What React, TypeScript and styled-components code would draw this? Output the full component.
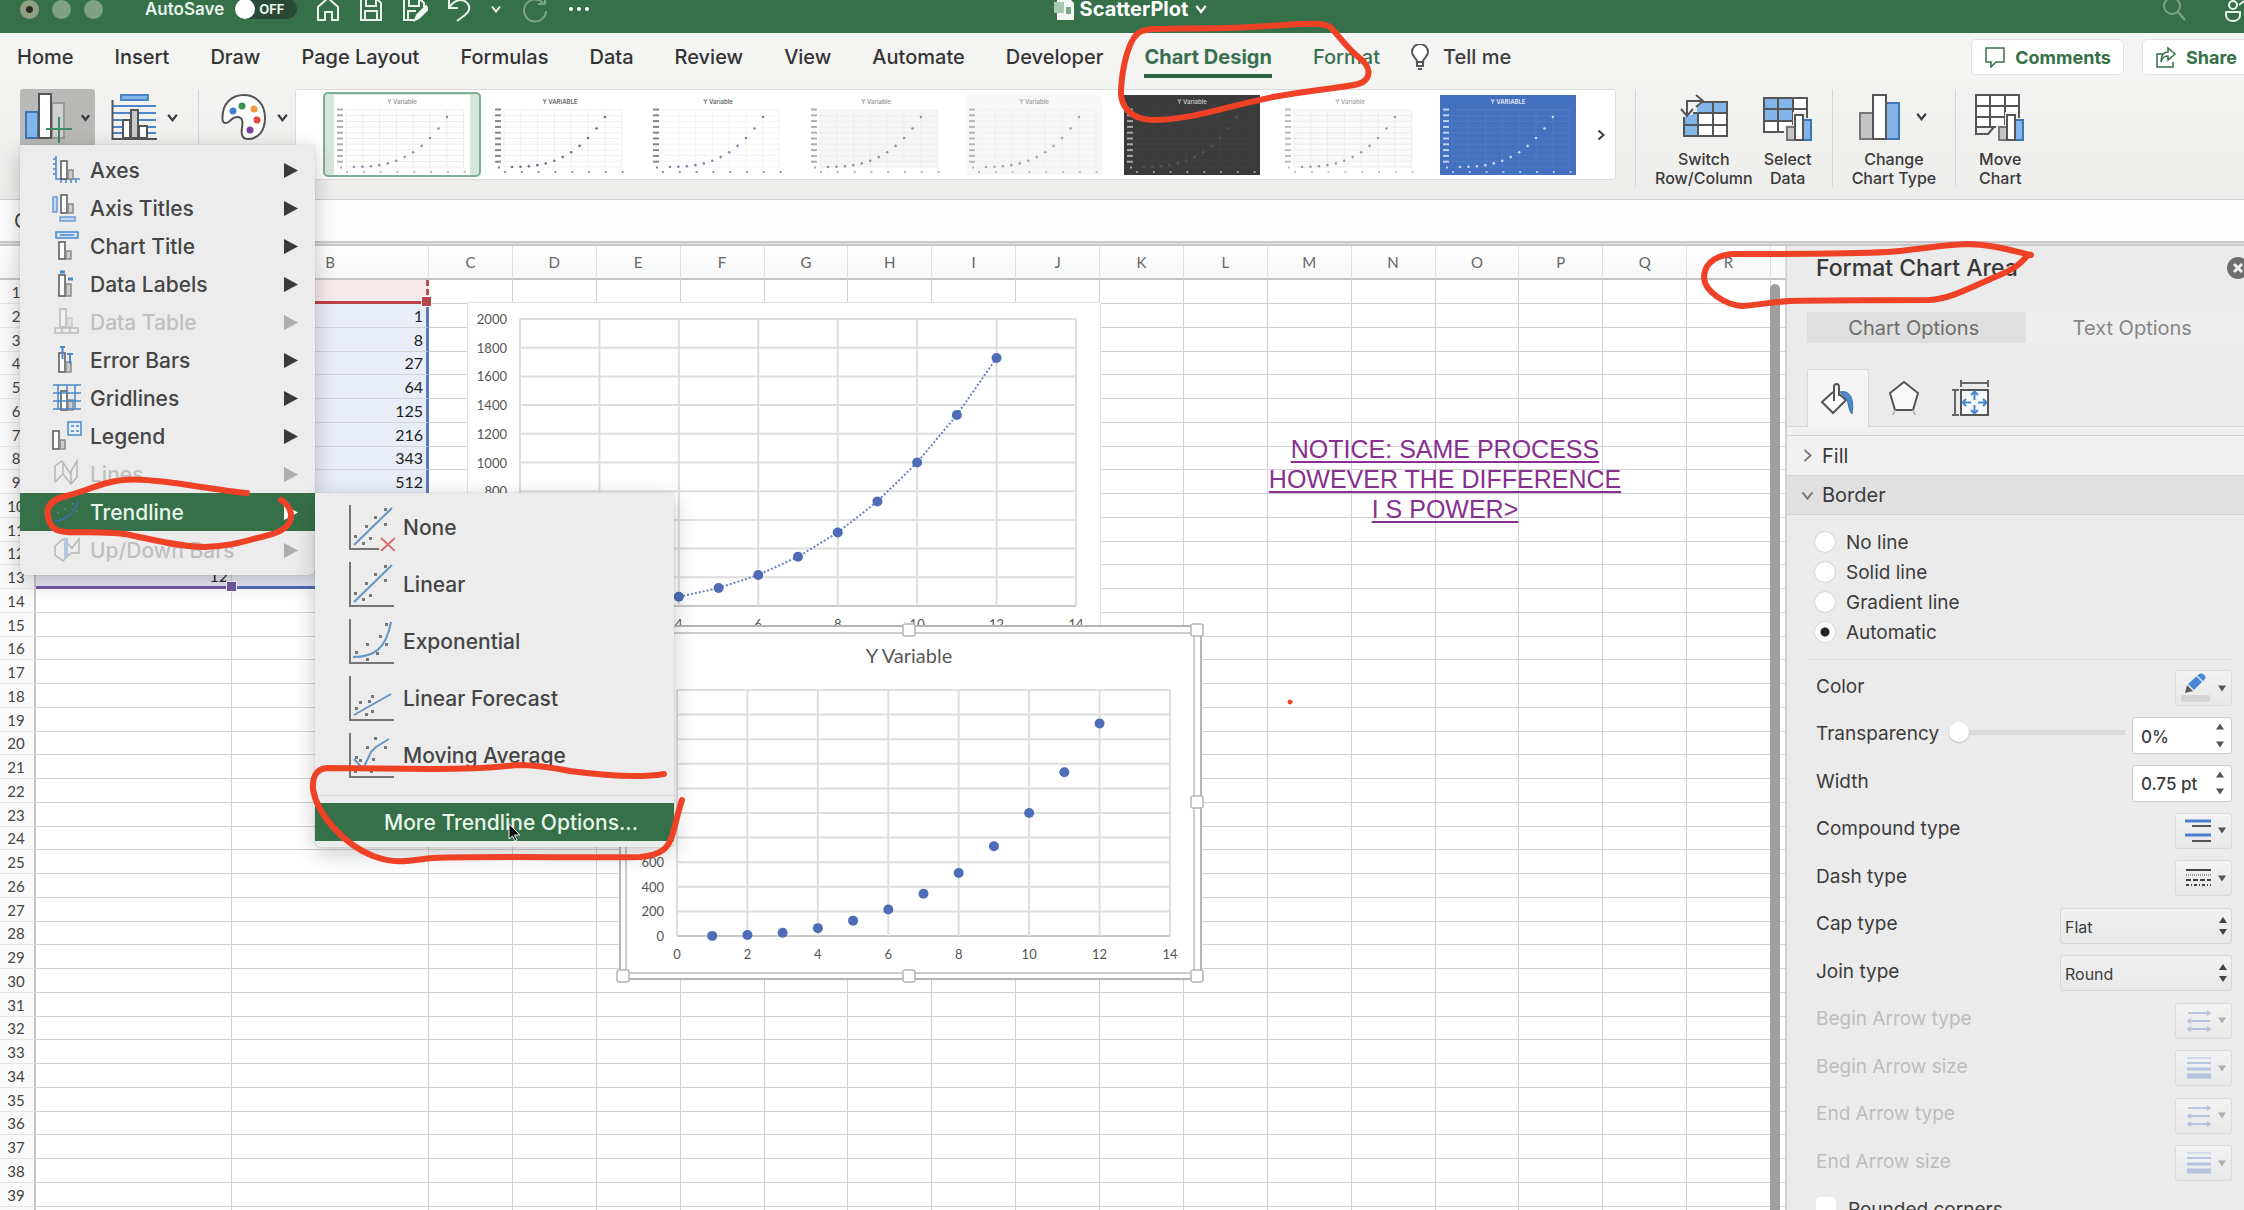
import React from "react";
import styled, { createGlobalStyle, css } from "styled-components";

const GREEN = "#357048";
const INK = "#3c3c3c";
const BLUE = "#4a86c8";
const SKY = "#84b5e8";
const UI = `Inter, "Liberation Sans", sans-serif`;
const GRID_FONT = `Lato, "Liberation Sans", sans-serif`;

const Global = createGlobalStyle`
  * { box-sizing: border-box; }
  html, body { margin: 0; height: 100%; overflow: hidden; }
  body { font-family: ${UI}; color: ${INK}; background: #fff; }
  button, input, select { font: inherit; color: inherit; margin: 0; }
  button { border: 0; background: none; padding: 0; cursor: default; }
  svg { display: block; flex: none; }
`;

const Page = styled.div`
  position: relative;
  display: flex;
  flex-direction: column;
  height: 100vh;
  overflow: hidden;
`;

/* ---------- title bar ---------- */
const TitleBar = styled.header`
  display: grid;
  grid-template-columns: 1fr auto 1fr;
  height: 33px;
  flex: none;
  padding-bottom: 15px;
  background: ${GREEN};
  color: #e8f3ea;
  overflow: hidden;
`;
const TitleGroup = styled.div<{ $end?: boolean }>`
  display: flex;
  align-items: center;
  height: 18px;
  gap: ${(p) => (p.$end ? "38px" : "19px")};
  padding-left: ${(p) => (p.$end ? "0" : "20px")};
  justify-content: ${(p) => (p.$end ? "flex-end" : "flex-start")};
`;
const Lights = styled.div`
  display: flex;
  gap: 13px;
  margin-right: 23px;
`;
const Light = styled.span<{ $dot?: boolean }>`
  width: 19px;
  height: 19px;
  border-radius: 50%;
  background: ${(p) => (p.$dot ? "radial-gradient(#2d2a22 3px, #8f9f80 4px)" : "#7fa181")};
`;
const AutoSave = styled.label`
  display: flex;
  align-items: center;
  gap: 11px;
  font-size: 17px;
  font-weight: 600;
  line-height: 18px;
`;
const Toggle = styled.button`
  display: flex;
  align-items: center;
  gap: 4px;
  width: 62px;
  height: 20px;
  border-radius: 10px;
  background: #2a4a37;
  font-size: 13px;
  font-weight: 700;
`;
const Knob = styled.span`
  width: 20px;
  height: 20px;
  border-radius: 50%;
  background: #fff;
`;
const BarIcon = styled.button<{ $dim?: boolean }>`
  opacity: ${(p) => (p.$dim ? 0.4 : 1)};
`;
const DocName = styled.h1`
  display: flex;
  align-items: center;
  gap: 6px;
  height: 18px;
  margin: 0;
  padding-left: 18px;
  font-size: 20px;
  font-weight: 700;
  line-height: 18px;
  color: #fff;
`;

/* ---------- tabs ---------- */
const TabRow = styled.nav`
  display: flex;
  align-items: center;
  height: 48px;
  flex: none;
  padding-left: 17px;
  gap: 41px;
  background: #f4f4f3;
  overflow: hidden;
`;
const Tab = styled.button<{ $tone?: "active" | "green" }>`
  height: 42px;
  font-size: 20px;
  font-weight: ${(p) => (p.$tone === "active" ? 700 : 500)};
  color: ${(p) => (p.$tone ? "#38704f" : "#333")};
  white-space: nowrap;
  box-shadow: ${(p) => (p.$tone === "active" ? "inset 0 -4px #2c6446" : "none")};
`;
const TellMe = styled.button`
  display: flex;
  align-items: center;
  gap: 14px;
  font-size: 20px;
  font-weight: 500;
  margin-left: -10px;
  white-space: nowrap;
`;
const TabActions = styled.div`
  display: flex;
  gap: 18px;
  margin-left: auto;
  margin-right: -6px;
`;
const Pill = styled.button`
  display: flex;
  align-items: center;
  justify-content: center;
  gap: 9px;
  height: 36px;
  padding: 0 12px;
  border: 1px solid #e2e2e2;
  border-radius: 5px;
  background: #fff;
  color: ${GREEN};
  font-size: 18px;
  font-weight: 700;
`;

/* ---------- ribbon ---------- */
const Ribbon = styled.section`
  display: flex;
  align-items: flex-start;
  height: 118px;
  flex: none;
  padding: 8px 0 0 20px;
  background: linear-gradient(#f3f3f2, #ededec);
`;
const MenuAnchor = styled.div`
  position: relative;
  width: 75px;
  flex: none;
`;
const SplitButton = styled.button<{ $pressed?: boolean }>`
  display: flex;
  align-items: center;
  justify-content: space-between;
  gap: ${(p) => (p.$pressed ? "5px" : "9px")};
  width: ${(p) => (p.$pressed ? "75px" : "auto")};
  height: 56px;
  padding: ${(p) => (p.$pressed ? "0 4px 0 5px" : "0")};
  border-radius: 3px 3px 0 0;
  background: ${(p) => (p.$pressed ? "#b9b9b8" : "none")};
`;
const Tools = styled.div`
  display: flex;
  padding: 0 19px 0 16px;
`;
const Rule = styled.div`
  width: 1px;
  height: 98px;
  flex: none;
  background: #d4d4d4;
`;
const Palette = styled.div`
  padding: 0 6px 0 22px;
`;
const Gallery = styled.div`
  display: flex;
  height: 91px;
  flex: none;
  padding-left: 27px;
  margin-right: 19px;
  border: 1px solid #dcdcdc;
  border-radius: 3px;
  background: #fff;
`;
const ThumbButton = styled.button<{ $selected?: boolean }>`
  display: flex;
  justify-content: center;
  width: 158px;
  height: 85px;
  margin-top: 2px;
  padding-top: 1px;
  border: 2px solid ${(p) => (p.$selected ? "#7fae94" : "transparent")};
  border-radius: 5px;
  background: ${(p) => (p.$selected ? "#d5e6dc" : "none")};
`;
const GalleryNext = styled.button`
  display: grid;
  place-items: center;
  width: 28px;
`;
const BigGroup = styled.div`
  display: flex;
  gap: 10px;
  padding: 0 19px;
`;
const BigButton = styled.button`
  display: flex;
  flex-direction: column;
  align-items: center;
  font-size: 16px;
  font-weight: 500;
  line-height: 19px;
  color: #3a3a3a;
`;
const BigIcon = styled.span`
  display: flex;
  align-items: center;
  gap: 14px;
  height: 61px;
  padding-bottom: 6px;
`;

/* ---------- menus ---------- */
const Menu = styled.ul<{ $sub?: boolean }>`
  position: absolute;
  z-index: 5;
  left: ${(p) => (p.$sub ? "100%" : "0")};
  top: ${(p) => (p.$sub ? "0" : "56px")};
  width: ${(p) => (p.$sub ? "359px" : "295px")};
  margin: 0;
  padding: 6px 0;
  list-style: none;
  background: #ececec;
  box-shadow: 0 6px 22px rgba(0, 0, 0, 0.22), 0 0 1px rgba(0, 0, 0, 0.4);
  border-radius: ${(p) => (p.$sub ? "0 0 5px 5px" : "0 0 6px 6px")};
`;
const MenuEntry = styled.li`
  position: relative;
`;
const MenuItem = styled.button<{ $sub?: boolean; $on?: boolean; $off?: boolean; $more?: boolean }>`
  display: flex;
  align-items: center;
  width: 100%;
  height: ${(p) => (p.$sub ? "57px" : "38px")};
  padding: ${(p) => (p.$more ? "0 0 0 69px" : p.$sub ? "0 0 0 33px" : "0 17px 0 32px")};
  gap: 8px;
  font-size: 21px;
  font-weight: 500;
  color: ${(p) => (p.$on ? "#e8f6e9" : "#454545")};
  background: ${(p) => (p.$on ? GREEN : "none")};
  ${(p) => p.$off && css` color: #bfbfbf; svg { opacity: 0.35; } `}
`;
const MenuLabel = styled.span`
  flex: 1;
  text-align: left;
`;
const MenuRule = styled.li`
  height: 1px;
  margin: 11px 0 7px;
  background: #d6d6d6;
`;

/* ---------- formula bar and body ---------- */
const FormulaBar = styled.div`
  height: 47px;
  flex: none;
  border-top: 1px solid #cfcfcf;
  border-bottom: 2px solid #c9c9c9;
  background: linear-gradient(#fdfdfd 41px, #c9c9c9 41px, #c9c9c9 43px, #e4e4e4 43px);
`;
const NameBox = styled.input`
  width: 120px;
  height: 41px;
  padding: 0 0 0 14px;
  border: 0;
  background: none;
  font-size: 20px;
`;
const Body = styled.main`
  display: flex;
  flex: 1;
  min-height: 0;
`;
const SheetArea = styled.section`
  position: relative;
  flex: 1;
  min-width: 0;
  overflow: hidden;
  background: #fff;
`;
const Grid = styled.table`
  width: 100%;
  table-layout: fixed;
  border-collapse: separate;
  border-spacing: 0;
  font-family: ${GRID_FONT};
  font-size: 16px;
  line-height: 18px;
`;
const ColHead = styled.th`
  height: 34px;
  padding: 0;
  border-right: 1px solid #e0e0e0;
  border-bottom: 2px solid #c4c4c4;
  background: linear-gradient(#fff, #f6f7f7);
  font-size: 15px;
  font-weight: 400;
  color: #666;
`;
const Row = styled.tr`
  height: 24px;
  &:nth-child(4n) { height: 23px; }
`;
const RowHead = styled.th`
  padding: 0 2px 0 0;
  border-right: 2px solid #c6c6c6;
  border-bottom: 1px solid #e4e4e4;
  background: #fafafa;
  font-size: 15px;
  font-weight: 400;
  text-align: center;
  color: #444;
`;
const Cell = styled.td<{ $kind?: "x" | "y" | "head"; $last?: boolean }>`
  position: relative;
  padding: 0 3px 0 0;
  border-right: 1px solid #d2d2d2;
  border-bottom: 1px solid #d2d2d2;
  text-align: right;
  color: #222;
  ${(p) => p.$kind === "x" && css` background: #ebe8f4; `}
  ${(p) => p.$kind === "y" && css` background: #e9edf8; border-right: 3px solid #5a78bd; `}
  ${(p) => p.$kind === "head" && css` background: #f8e9ea; border-right: 3px dashed #c05055; border-bottom: 3px solid #b8434a; `}
  ${(p) => p.$last && css` border-bottom: 3px solid ${p.$kind === "x" ? "#7559a8" : "#4f6db5"}; `}
`;
const Handle = styled.span<{ $color: string }>`
  position: absolute;
  right: -5px;
  bottom: -5px;
  z-index: 1;
  width: 9px;
  height: 9px;
  background: ${(p) => p.$color};
  box-shadow: 0 0 0 1px #fff;
`;
const ScrollThumb = styled.div`
  position: absolute;
  top: 38px;
  right: 6px;
  bottom: 0;
  width: 10px;
  border-radius: 5px 5px 0 0;
  background: #9f9f9f;
`;
const ChartBox = styled.figure<{ $x: number; $y: number }>`
  position: absolute;
  left: ${(p) => p.$x}px;
  top: ${(p) => p.$y}px;
  margin: 0;
`;
const Notice = styled.p`
  position: absolute;
  left: 1245px;
  top: 188px;
  width: 400px;
  margin: 0;
  font: 25px/30px "Liberation Sans", Arial, sans-serif;
  text-align: center;
  text-decoration: underline;
  text-decoration-thickness: 2px;
  text-underline-offset: 3px;
  text-decoration-skip-ink: none;
  color: #86308f;
`;

/* ---------- side panel ---------- */
const Panel = styled.aside`
  width: 458px;
  flex: none;
  border-left: 1px solid #cfcfcf;
  background: #ebebeb;
  overflow: hidden;
`;
const PanelHead = styled.div`
  display: flex;
  align-items: center;
  justify-content: space-between;
  height: 43px;
  padding-left: 29px;
  margin-right: -5px;
`;
const PanelTitle = styled.h2`
  margin: 0;
  font-size: 23px;
  font-weight: 500;
  color: #383838;
`;
const Segments = styled.div`
  display: grid;
  grid-template-columns: 1fr 1fr;
  margin: 23px 0 26px 20px;
`;
const Segment = styled.button<{ $on?: boolean }>`
  height: 31px;
  padding-right: 5px;
  font-size: 20px;
  color: ${(p) => (p.$on ? "#6c6c6c" : "#868686")};
  background: ${(p) => (p.$on ? "#dfdfdf" : "#eee")};
`;
const IconTabs = styled.div`
  display: flex;
  padding-left: 20px;
  height: 58px;
  border-bottom: 1px solid #d6d6d6;
`;
const IconTab = styled.button<{ $on?: boolean }>`
  display: grid;
  place-items: center;
  width: 62px;
  height: 58px;
  margin-right: 4px;
  border: ${(p) => (p.$on ? "1px solid #d8d8d8" : "0")};
  border-bottom: 0;
  border-radius: 3px 3px 0 0;
  background: ${(p) => (p.$on ? "#f5f5f5" : "none")};
`;
const Section = styled.button<{ $open?: boolean }>`
  display: flex;
  align-items: center;
  gap: 7px;
  width: 100%;
  height: 40px;
  padding-left: 13px;
  border-top: 1px solid #d2d2d2;
  border-bottom: ${(p) => (p.$open ? "1px solid #d2d2d2" : "0")};
  background: ${(p) => (p.$open ? "#e0e0e0" : "#f1f1f1")};
  font-size: 20px;
`;
const Strip = styled.div`
  height: 8px;
  background: #f1f1f1;
`;
const Radios = styled.fieldset`
  margin: 12px 12px 0 20px;
  padding: 0 0 12px 8px;
  border: 0;
  border-bottom: 1px solid #dedede;
`;
const RadioLabel = styled.label`
  display: flex;
  align-items: center;
  gap: 11px;
  height: 30px;
  font-size: 19px;
`;
const Radio = styled.input`
  appearance: none;
  width: 20px;
  height: 20px;
  border-radius: 50%;
  background: #fff;
  box-shadow: 0 0 2px rgba(0, 0, 0, 0.25);
  &:checked { background: radial-gradient(#222 4px, #fff 5px); }
`;
const Rows = styled.div`
  padding: 4px 12px 0 29px;
`;
const Field = styled.div<{ $off?: boolean }>`
  display: flex;
  align-items: center;
  justify-content: space-between;
  height: 48px;
  font-size: 19px;
  color: ${(p) => (p.$off ? "#bdbdbd" : INK)};
  &:nth-child(even) { height: 47px; }
`;
const FieldLabel = styled.label`
  padding-bottom: 4px;
`;
const DropButton = styled.button<{ $off?: boolean }>`
  display: flex;
  align-items: center;
  justify-content: flex-end;
  gap: 7px;
  width: 57px;
  height: 36px;
  padding-right: 5px;
  border: 1px solid #dadada;
  border-radius: 3px;
  background: linear-gradient(#f3f3f3, #e8e8e8);
  svg { opacity: ${(p) => (p.$off ? 0.4 : 1)}; }
`;
const Slider = styled.input`
  appearance: none;
  flex: 1;
  min-width: 0;
  height: 20px;
  margin: 0 7px 7px 10px;
  background: linear-gradient(#dadada, #dadada) center / 100% 5px no-repeat;
  &::-webkit-slider-thumb {
    appearance: none;
    width: 20px;
    height: 20px;
    border-radius: 50%;
    background: #fff;
    box-shadow: 0 1px 2px rgba(0, 0, 0, 0.2);
  }
`;
const SpinBox = styled.div`
  display: flex;
  width: 100px;
  height: 37px;
  border: 1px solid #cdcdcd;
  border-radius: 3px;
  background: #fff;
`;
const SpinInput = styled.input`
  flex: 1;
  min-width: 0;
  padding: 2px 0 0 8px;
  border: 0;
  background: none;
  font-size: 17px;
  font-weight: 500;
`;
const SpinArrows = styled.div`
  display: grid;
  width: 22px;
  button { display: grid; place-items: center; }
`;
const SelectBox = styled.div`
  position: relative;
  width: 172px;
  svg { position: absolute; right: 5px; top: 9px; pointer-events: none; }
`;
const Select = styled.select`
  appearance: none;
  width: 100%;
  height: 36px;
  padding: 2px 4px 0;
  border: 1px solid #d6d6d6;
  border-radius: 3px;
  background: linear-gradient(#f1f1f1, #e8e8e8);
  font-size: 16px;
`;
const CheckLabel = styled.label`
  display: flex;
  align-items: center;
  gap: 12px;
  padding: 10px 0 0 29px;
  font-size: 19px;
`;
const Check = styled.input`
  appearance: none;
  width: 20px;
  height: 24px;
  border-radius: 4px;
  background: #fff;
`;
const Ink = styled.svg`
  position: absolute;
  left: 0;
  top: 0;
  z-index: 10;
  pointer-events: none;
`;

/* ---------- small drawings ---------- */
const Chevron = ({ dir = "down", size = 12, color = INK, w = 2 }: { dir?: "down" | "right"; size?: number; color?: string; w?: number }) => (
  <svg width={size} height={size} viewBox="0 0 12 12" fill="none" stroke={color} strokeWidth={w}>
    <path d={dir === "down" ? "M2 3.5l4 5 4-5" : "M3.5 1.5l5 4.5-5 4.5"} />
  </svg>
);
const Tri = ({ up, color = "#555" }: { up?: boolean; color?: string }) => (
  <svg width="8" height="7" viewBox="0 0 8 7"><path fill={color} d={up ? "M0 6.5L4 .5l4 6z" : "M0 .5l4 6 4-6z"} /></svg>
);
const MenuArrow = ({ color }: { color: string }) => (
  <svg width="14" height="15" viewBox="0 0 14 15"><path fill={color} d="M0 0l14 7.5L0 15z" /></svg>
);

const S = ({ w, h, children, box }: { w: number; h: number; box?: string; children: React.ReactNode }) => (
  <svg width={w} height={h} viewBox={box ?? `0 0 ${w} ${h}`} fill="none" stroke="currentColor" strokeWidth="2">{children}</svg>
);

const Bars = ({ x = 8, y = 6, b = 26 }: { x?: number; y?: number; b?: number }) => (
  <g stroke="#555" strokeWidth="1.5">
    <rect x={x} y={y} width="6" height={b - y} fill="#fff" />
    <rect x={x + 7} y={y + 9} width="5" height={b - y - 9} fill="#ccc" stroke="#8a8a8a" />
  </g>
);

const menuIcons: Record<string, React.ReactNode> = {
  Axes: <><path d="M4 1v23h24M1 4h3M1 9h3M1 14h3M1 19h3M9 24v4M14 24v4M19 24v4M24 24v4" stroke={BLUE} strokeWidth="1.5" /><Bars x={9} y={6} b={24} /></>,
  "Axis Titles": <><rect x="1" y="4" width="4" height="15" fill="#c5d8f2" stroke="#6d9bd4" strokeWidth="1.5" /><rect x="8" y="24" width="15" height="4" fill="#c5d8f2" stroke="#6d9bd4" strokeWidth="1.5" /><Bars x={9} y={2} b={20} /></>,
  "Chart Title": <><rect x="4" y="1" width="22" height="6" fill="#cfe1f5" stroke={BLUE} strokeWidth="1.5" /><path d="M8 4h14" stroke={BLUE} strokeWidth="1.5" /><Bars x={7} y={11} b={28} /></>,
  "Data Labels": <><path d="M8 3h5M16 10h5" stroke={BLUE} strokeWidth="3" /><Bars x={7} y={6} b={27} /></>,
  "Data Table": <><Bars x={8} y={2} b={20} /><path d="M3 21h23v5H3zM10 21v5M18 21v5" stroke="#666" strokeWidth="1.5" /></>,
  "Error Bars": <><Bars x={7} y={8} b={27} /><path d="M8 2h5M10.500 2v12M15 9h6M18 9v10" stroke={BLUE} strokeWidth="2" /></>,
  Gridlines: <><Bars x={9} y={8} b={27} /><path d="M1 2h28M1 10h28M1 18h28M1 26h28M6 2v24M15 2v7M23 2v24" stroke={BLUE} strokeWidth="1.5" /></>,
  Legend: <><Bars x={1} y={10} b={28} /><rect x="16" y="1" width="13" height="13" fill="#e8f1fb" stroke={BLUE} strokeWidth="1.5" /><path d="M19 5h3M19 10h3M24 5h3M24 10h3" stroke={BLUE} strokeWidth="1.5" /></>,
  Lines: <path d="M3 7l7-5 8 12 7-12v16l-6 7-8-10-8 8zM11 3v12M19 13v11" stroke="#555" strokeWidth="1.5" />,
  Trendline: <><path d="M3 24c10 0 20-8 23-20" stroke="#3c6f9e" strokeWidth="2" /><path d="M5 16h2M12 12h2M20 7h2M24 14h2" stroke="#57806a" strokeWidth="2" /></>,
  "Up/Down Bars": <><path d="M3 11l8-7 9 9 7-9v14l-8 0-8 8-8-6z" stroke="#555" strokeWidth="1.5" /><path d="M14 3v20" stroke={BLUE} strokeWidth="4" /></>,
};

const trendIcons: Record<string, React.ReactNode> = {
  None: <path d="M6 40L44 3" />,
  Linear: <path d="M6 40L44 3" />,
  Exponential: <path d="M5 38C26 38 38 30 43 3" />,
  "Linear Forecast": <path d="M6 39L43 18" />,
  "Moving Average": <path d="M6 26l9 10 8-17 5-5 13-8" />,
};
const trendDots: Record<string, number[][]> = {
  None: [[7, 31], [15, 38], [22, 33], [18, 21], [27, 12], [37, 19], [37, 4]],
  Linear: [[7, 31], [15, 37], [22, 33], [18, 21], [27, 12], [37, 18], [37, 4]],
  Exponential: [[8, 33], [19, 40], [29, 34], [19, 25], [32, 17], [38, 25], [38, 5]],
  "Linear Forecast": [[8, 32], [12, 26], [21, 25], [24, 20], [18, 38], [24, 35]],
  "Moving Average": [[8, 24], [12, 27], [19, 14], [27, 5], [25, 26], [37, 14], [7, 38], [23, 38]],
};
const TrendIcon = ({ name }: { name: string }) => (
  <svg width="47" height="46" viewBox="0 0 47 46" fill="none">
    <path d={name === "None" ? "M2 0v44h29" : "M2 0v44h44"} stroke="#757575" strokeWidth="2" />
    <g stroke="#6795c4" strokeWidth="2">{trendIcons[name]}</g>
    {trendDots[name].map(([x, y]) => <rect key={`${x}-${y}`} x={x - 1} y={y - 1} width="3" height="3" fill="#777" />)}
    {name === "None" && <path d="M33 33l14 13M47 33L33 46" stroke="#dc6a6f" strokeWidth="2" />}
  </svg>
);

const cubes = Array.from({ length: 12 }, (_, i) => (i + 1) ** 3);

type ThumbKind = { bg: string; line: string; dot: string; text: string; title: string; plot?: string };
const thumbs: ThumbKind[] = [
  { bg: "#fff", line: "#ececec", dot: "#8e93a8", text: "#999", title: "Y Variable" },
  { bg: "#fff", line: "#efefef", dot: "#6c7188", text: "#666", title: "Y VARIABLE" },
  { bg: "#fff", line: "#f3f3f3", dot: "#7f87ad", text: "#666", title: "Y Variable" },
  { bg: "#fff", line: "#ededed", dot: "#8e93a0", text: "#999", title: "Y Variable", plot: "#f6f6f6" },
  { bg: "#f7f7f7", line: "#efefef", dot: "#a2a4b0", text: "#a5a5a5", title: "Y Variable" },
  { bg: "#3b3b3b", line: "#414141", dot: "#50545f", text: "#c4c4c4", title: "Y Variable" },
  { bg: "#fff", line: "#ececec", dot: "#9a9da6", text: "#aaa", title: "Y Variable", plot: "#fafafa" },
  { bg: "#4470c0", line: "#4f7ac6", dot: "#c9d8f2", text: "#e1eafa", title: "Y VARIABLE" },
];
const Thumb = ({ t }: { t: ThumbKind }) => (
  <svg width="136" height="80" viewBox="0 0 136 80">
    <rect width="136" height="80" fill={t.bg} />
    {t.plot && <rect x="12" y="15" width="118" height="57" fill={t.plot} />}
    <path stroke={t.line} d={Array.from({ length: 11 }, (_, i) => `M12 ${15 + i * 5.7}H130`).join("") + Array.from({ length: 8 }, (_, i) => `M${12 + i * 16.8} 15V72`).join("")} />
    {Array.from({ length: 11 }, (_, i) => <rect key={i} x={i === 10 ? 6 : 3} y={13.5 + i * 5.8} width={i === 10 ? 2 : 6} height="2" fill={t.text} opacity="0.8" />)}
    {Array.from({ length: 8 }, (_, i) => <rect key={i} x={12 + i * 16.8} y="76" width="2" height="2" fill={t.text} opacity="0.7" />)}
    {cubes.map((v, i) => <circle key={v} cx={20 + i * 8.45} cy={72 - (v / 1728) * 50} r="1.3" fill={t.dot} />)}
    <text x="68" y="9" textAnchor="middle" fontSize="6" fontWeight="600" fill={t.text}>{t.title}</text>
  </svg>
);

/* ---------- worksheet charts ---------- */
type PlotProps = { x: number; y: number; w: number; h: number; size: number; trend?: boolean };
const Plot = ({ x, y, w, h, size, trend }: PlotProps) => {
  const px = (v: number) => x + (v / 14) * w;
  const py = (v: number) => y + h - (v / 2000) * h;
  return (
    <g fontFamily={GRID_FONT} fontSize="13" fill="#555">
      {Array.from({ length: 11 }, (_, i) => (
        <g key={i}>
          <path d={`M${x} ${py(i * 200)}H${x + w}`} stroke={i === 0 ? "#c8c8c8" : "#dedede"} strokeWidth="2" />
          <text x={x - 13} y={py(i * 200) + 5} textAnchor="end">{i * 200}</text>
        </g>
      ))}
      {Array.from({ length: 8 }, (_, i) => (
        <g key={i}>
          <path d={`M${px(i * 2)} ${y}V${y + h}`} stroke="#dedede" strokeWidth="2" />
          <text x={px(i * 2)} y={y + h + 23} textAnchor="middle">{i * 2}</text>
        </g>
      ))}
      {trend && <polyline fill="none" stroke="#6a82c4" strokeWidth="2" strokeDasharray="2 2" points={cubes.map((v, i) => `${px(i + 1)},${py(v)}`).join(" ")} />}
      {cubes.map((v, i) => <circle key={v} cx={px(i + 1)} cy={py(v)} r={size} fill="#4e6db6" />)}
    </g>
  );
};

const ChartOne = () => (
  <svg width="634" height="346" viewBox="0 0 634 346">
    <rect x="0.5" y="0.5" width="633" height="345" fill="#fff" stroke="#e2e2e2" />
    <Plot x={53} y={17} w={556} h={287} size={5} trend />
  </svg>
);
const ChartTwo = () => (
  <svg width="592" height="364" viewBox="0 0 592 364">
    <rect x="5" y="5" width="581" height="353" fill="#fff" stroke="#b5b5b5" strokeWidth="2" />
    <rect x="11" y="12" width="568" height="340" fill="#fff" stroke="#cdcdcd" strokeWidth="2" />
    <text x="294" y="42" textAnchor="middle" fontFamily={GRID_FONT} fontSize="20" fill="#595959">Y Variable</text>
    <Plot x={62} y={69} w={493} h={246} size={5} />
    {[[8, 9], [294, 9], [582, 9], [582, 181], [582, 355], [294, 355], [8, 355]].map(([cx, cy]) => (
      <rect key={`${cx}-${cy}`} x={cx - 6} y={cy - 6} width="12" height="12" rx="2" fill="#fff" stroke="#b5b5b5" strokeWidth="1.5" />
    ))}
  </svg>
);

/* ---------- ribbon drawings ---------- */
const BarTrio = ({ flip }: { flip?: boolean }) => (
  <svg width="42" height="46" viewBox="0 0 42 46" stroke="#555" strokeWidth="2">
    {flip ? (
      <>
        <rect x="1" y="19" width="12" height="26" fill={SKY} stroke="#3d76b5" />
        <rect x="27" y="10" width="12" height="35" fill="#cfcfcf" stroke="#999" />
        <rect x="14" y="1" width="12" height="44" fill="#fff" />
      </>
    ) : (
      <>
        <rect x="1" y="19" width="13" height="26" fill="#c3c3c3" stroke="#777" />
        <rect x="27" y="9" width="13" height="36" fill={SKY} stroke="#3d76b5" />
        <rect x="14" y="1" width="13" height="44" fill="#fff" />
      </>
    )}
  </svg>
);
const AddElementIcon = () => (
  <svg width="50" height="52" viewBox="0 0 50 52">
    <g transform="translate(0 2)"><BarTrio flip /></g>
    <path d="M21 38h26M34 26v26" stroke="#3f8c6a" strokeWidth="2" />
  </svg>
);
const QuickLayoutIcon = () => (
  <svg width="46" height="46" viewBox="0 0 46 46" strokeWidth="2">
    <rect x="10" y="1" width="27" height="5" fill={SKY} stroke={BLUE} />
    <path d="M2 12h43M2 19h43M2 26h43M2 33h43M2 39h43" stroke={BLUE} />
    <path d="M1.5 6v39H46" fill="none" stroke="#555" />
    <g stroke="#555"><rect x="12" y="26" width="7" height="18" fill="#fff" /><rect x="20" y="16" width="7" height="28" fill="#c9c9c9" /><rect x="28" y="32" width="8" height="12" fill="#fff" /></g>
  </svg>
);
const PaletteIcon = () => (
  <svg width="46" height="48" viewBox="0 0 46 48">
    <path d="M1.5 26C1 10 11 2 23 2c13 0 21 10 21 23S37 46 27 46c-6 0-7-5-6-11s1-11-5-11-7 6-11 6c-2 0-3.5-1-3.5-4z" fill="#fff" stroke="#555" strokeWidth="2" />
    <circle cx="12" cy="18" r="3.5" fill="#3f7fd0" /><circle cx="21" cy="13" r="3.5" fill="#3a9150" /><circle cx="33" cy="16" r="3.5" fill="#ee9a44" /><circle cx="36" cy="27" r="3.5" fill="#e04b41" /><circle cx="29" cy="37" r="3.5" fill="#7a3fa0" />
  </svg>
);
const MiniBars = () => (
  <g strokeWidth="2"><rect x="24" y="34" width="8" height="13" fill="#c3c3c3" stroke="#777" /><rect x="40" y="27" width="8" height="20" fill={SKY} stroke="#3d76b5" /><rect x="32" y="22" width="8" height="25" fill="#fff" stroke="#555" /></g>
);
const SwitchIcon = () => (
  <svg width="50" height="48" viewBox="0 0 50 48" fill="none" strokeWidth="2">
    <path d="M18 9h30v34H5V22h13z" fill="#fff" />
    <path d="M22 9h26v11H18v-7zM5 24l13-4v23H5z" fill={SKY} />
    <path d="M22 9h26v34H5V24M5 32h43M14 20h34M19 20v23M34 9v34" stroke="#555" />
    <path d="M8 22V8h15M2 16l6 7 6-7M17 2l7 6-7 6" stroke="#555" />
  </svg>
);
const SelectIcon = () => (
  <svg width="50" height="48" viewBox="0 0 50 48" fill="none" strokeWidth="2">
    <rect x="1" y="5" width="43" height="34" fill="#fff" />
    <path d="M1 5h29v23H1z" fill={SKY} />
    <path d="M1 5h43v34H1zM1 16h43M1 28h43M15 5v34M30 5v34" stroke="#555" />
    <path d="M21 32h9V19h13v6h7v23H21z" fill="#f0f0ef" /><MiniBars />
  </svg>
);
const MoveIcon = () => (
  <svg width="50" height="48" viewBox="0 0 50 48" fill="none" strokeWidth="2">
    <path d="M1 2h43v32H1z" fill="#fff" stroke="#555" /><path d="M1 13h43M1 24h43M15 2v32M30 2v32M1 34v7h12l6-7" stroke="#555" />
    <path d="M21 32h9V19h13v6h7v23H21z" fill="#f0f0ef" /><MiniBars />
  </svg>
);

const PencilIcon = () => (
  <svg width="30" height="30" viewBox="0 0 30 30">
    <path d="M7 11L18 1c3-2 8 2 6 5L13 17z" fill="#4b87d6" /><path d="M16 3l6 6" stroke="#d8e6f7" strokeWidth="1.5" /><path d="M4 20l2-8 6 6z" fill="#5a5a5a" />
    <rect x="0" y="22" width="29" height="7" rx="2" fill="#d4d4d4" />
  </svg>
);
const CompoundIcon = () => (
  <svg width="26" height="24" viewBox="0 0 26 24"><path d="M0 2h26M0 16h26" stroke="#4d7fd0" strokeWidth="3" /><path d="M7 7h19M7 22h19" stroke="#555" strokeWidth="2" /></svg>
);
const DashIcon = () => (
  <svg width="25" height="18" viewBox="0 0 25 18" stroke="#444"><path d="M0 1h25" strokeWidth="2" /><path d="M0 6h25" strokeDasharray="1 1" strokeWidth="1" /><path d="M0 11h25" strokeDasharray="5 2" strokeWidth="2" /><path d="M0 16h25" strokeDasharray="3 2 1 2" strokeWidth="2" /></svg>
);
const ArrowTypeIcon = () => (
  <svg width="24" height="22" viewBox="0 0 24 22" fill="none" stroke="#6c86bd" strokeWidth="2"><path d="M1 3h22M1 11h22M1 19h22M20 1l3 2-3 2M4 9l-3 2 3 2M4 17l-3 2 3 2M20 17l3 2-3 2" /></svg>
);
const ArrowSizeIcon = () => (
  <svg width="24" height="22" viewBox="0 0 24 22" stroke="#6486c8"><path d="M0 1h24" /><path d="M0 6h24" strokeWidth="2" /><path d="M0 12h24" strokeWidth="3" /><path d="M0 19h24" strokeWidth="5" /></svg>
);

const fields: { name: string; off?: boolean; icon?: React.ReactNode; kind: "drop" | "slide" | "spin" | "select"; value?: string }[] = [
  { name: "Color", kind: "drop", icon: <PencilIcon /> },
  { name: "Transparency", kind: "slide", value: "0%" },
  { name: "Width", kind: "spin", value: "0.75 pt" },
  { name: "Compound type", kind: "drop", icon: <CompoundIcon /> },
  { name: "Dash type", kind: "drop", icon: <DashIcon /> },
  { name: "Cap type", kind: "select", value: "Flat" },
  { name: "Join type", kind: "select", value: "Round" },
  { name: "Begin Arrow type", kind: "drop", off: true, icon: <ArrowTypeIcon /> },
  { name: "Begin Arrow size", kind: "drop", off: true, icon: <ArrowSizeIcon /> },
  { name: "End Arrow type", kind: "drop", off: true, icon: <ArrowTypeIcon /> },
  { name: "End Arrow size", kind: "drop", off: true, icon: <ArrowSizeIcon /> },
];

const Spin = ({ id, value }: { id: string; value: string }) => (
  <SpinBox>
    <SpinInput id={id} defaultValue={value} />
    <SpinArrows>
      <button aria-label="Increase"><Tri up /></button>
      <button aria-label="Decrease"><Tri /></button>
    </SpinArrows>
  </SpinBox>
);

const tabs = ["Home", "Insert", "Draw", "Page Layout", "Formulas", "Data", "Review", "View", "Automate", "Developer"];
const columns = "ABCDEFGHIJKLMNOPQR".split("");
const menuNames = Object.keys(menuIcons);
const disabled = ["Data Table", "Lines", "Up/Down Bars"];

function TrendMenu() {
  return (
    <Menu $sub>
      {Object.keys(trendIcons).map((n) => (
        <MenuEntry key={n}><MenuItem $sub><TrendIcon name={n} /><MenuLabel>{n}</MenuLabel></MenuItem></MenuEntry>
      ))}
      <MenuRule />
      <MenuEntry><MenuItem $on $more>More Trendline Options...</MenuItem></MenuEntry>
    </Menu>
  );
}

function ElementMenu() {
  return (
    <Menu>
      {menuNames.map((n) => {
        const on = n === "Trendline";
        const off = disabled.includes(n);
        return (
          <MenuEntry key={n}>
            <MenuItem $on={on} $off={off}>
              <S w={30} h={30}>{menuIcons[n]}</S>
              <MenuLabel>{n}</MenuLabel>
              <MenuArrow color={on ? "#fff" : "#3a3a3a"} />
            </MenuItem>
            {on && <TrendMenu />}
          </MenuEntry>
        );
      })}
    </Menu>
  );
}

function Worksheet() {
  return (
    <SheetArea>
      <Grid>
        <colgroup>
          <col width="36" /><col width="196" /><col width="197" />
          {columns.slice(2).map((c) => <col key={c} />)}
          <col width="15" />
        </colgroup>
        <thead>
          <tr><ColHead />{columns.map((c) => <ColHead key={c} scope="col">{c}</ColHead>)}<ColHead /></tr>
        </thead>
        <tbody>
          {Array.from({ length: 40 }, (_, i) => i + 1).map((r) => {
            const data = r >= 2 && r <= 13;
            return (
              <Row key={r}>
                <RowHead scope="row">{r}</RowHead>
                <Cell $kind={data ? "x" : undefined} $last={r === 13}>{data ? r - 1 : ""}{r === 13 && <Handle $color="#7559a8" />}</Cell>
                <Cell $kind={data ? "y" : r === 1 ? "head" : undefined} $last={r === 13}>{data ? cubes[r - 2] : ""}{r === 1 && <Handle $color="#b8434a" />}</Cell>
                {columns.slice(2).map((c) => <Cell key={c} />)}
                <Cell />
              </Row>
            );
          })}
        </tbody>
      </Grid>
      <ChartBox $x={467} $y={56}><ChartOne /></ChartBox>
      <ChartBox $x={615} $y={375}><ChartTwo /></ChartBox>
      <Notice>NOTICE: SAME PROCESS<br />HOWEVER THE DIFFERENCE<br />I S POWER&gt;</Notice>
      <ScrollThumb />
    </SheetArea>
  );
}

function FormatPanel() {
  return (
    <Panel>
      <PanelHead>
        <PanelTitle>Format Chart Area</PanelTitle>
        <button aria-label="Close">
          <svg width="22" height="22" viewBox="0 0 22 22"><circle cx="11" cy="11" r="11" fill="#6e6e6e" /><path d="M7 7l8 8M15 7l-8 8" stroke="#eee" strokeWidth="3" /></svg>
        </button>
      </PanelHead>
      <Segments><Segment $on>Chart Options</Segment><Segment>Text Options</Segment></Segments>
      <IconTabs>
        <IconTab $on aria-label="Fill and line">
          <svg width="36" height="34" viewBox="0 0 36 34"><path d="M13 10L2 20l11 11 13-13-7-6" fill="#fff" stroke="#555" strokeWidth="2" /><path d="M14 19V5c0-4 5-4 5 0v9" fill="none" stroke="#555" strokeWidth="2" /><path d="M20 10c8-2 15 4 12 22-4-4-3-12-6-15z" fill="#4d88cc" stroke="#3a6ea8" /></svg>
        </IconTab>
        <IconTab aria-label="Effects">
          <svg width="32" height="36" viewBox="0 0 32 36"><path d="M16 2l14 11-5 17H7L2 13z" fill="#fafafa" stroke="#555" strokeWidth="2" /><path d="M7 30l-2 5M25 30l2 5" stroke="#bbb" strokeWidth="2" /></svg>
        </IconTab>
        <IconTab aria-label="Size and properties">
          <svg width="38" height="38" viewBox="0 0 38 38" fill="none" strokeWidth="2"><path d="M10 4h27M10 1v7M37 1v7M4 11v25M1 11h7M1 36h7" stroke="#666" /><rect x="10" y="11" width="27" height="25" fill="#f4f8fd" stroke="#555" /><path d="M23.5 13v8M23.5 26v8M12 23.5h8M27 23.5h8M20 16l3.5-3.5L27 16M20 31l3.5 3.5L27 31M15 20l-3.5 3.5L15 27M32 20l3.5 3.5L32 27" stroke={BLUE} /></svg>
        </IconTab>
      </IconTabs>
      <Strip />
      <Section><Chevron dir="right" size={15} color="#777" w={1.5} />Fill</Section>
      <Section $open><Chevron size={15} color="#777" w={1.5} />Border</Section>
      <Radios>
        {["No line", "Solid line", "Gradient line", "Automatic"].map((n) => (
          <RadioLabel key={n}><Radio type="radio" name="line" defaultChecked={n === "Automatic"} />{n}</RadioLabel>
        ))}
      </Radios>
      <Rows>
        {fields.map((f) => {
          const id = f.name.toLowerCase().replace(/ /g, "-");
          return (
            <Field key={f.name} $off={f.off}>
              <FieldLabel htmlFor={id}>{f.name}</FieldLabel>
              {f.kind === "drop" && <DropButton id={id} $off={f.off}>{f.icon}<Tri /></DropButton>}
              {f.kind === "slide" && <><Slider type="range" defaultValue={0} aria-label="Transparency amount" /><Spin id={id} value={f.value!} /></>}
              {f.kind === "spin" && <Spin id={id} value={f.value!} />}
              {f.kind === "select" && (
                <SelectBox>
                  <Select id={id}><option>{f.value}</option></Select>
                  <svg width="8" height="18" viewBox="0 0 8 18"><path fill="#444" d="M0 6l4-6 4 6zM0 12l4 6 4-6z" /></svg>
                </SelectBox>
              )}
            </Field>
          );
        })}
      </Rows>
      <CheckLabel><Check type="checkbox" />Rounded corners</CheckLabel>
    </Panel>
  );
}

export default function App() {
  return (
    <Page>
      <Global />
      <TitleBar>
        <TitleGroup>
          <Lights><Light $dot /><Light /><Light /></Lights>
          <AutoSave>AutoSave<Toggle><Knob /><span>OFF</span></Toggle></AutoSave>
          <BarIcon aria-label="Home"><S w={24} h={26}><path d="M2 11L12 2l10 9v13h-6v-8H9v8H2z" /></S></BarIcon>
          <BarIcon aria-label="Save"><S w={24} h={26}><path d="M2 3h16l4 4v17H2zM7 3v7h10V3M6 24v-9h12v9" /></S></BarIcon>
          <BarIcon aria-label="Save as"><S w={26} h={26}><path d="M12 24H2V3h16l4 4v4M7 3v7h10V3M6 24v-9h8" /><path d="M13 24l2-5 9-9 2 3-9 9z" fill="#fff" /></S></BarIcon>
          <BarIcon aria-label="Undo"><S w={24} h={26}><path d="M2 3v9h9M2 12C7 4 14 2 19 6s4 9-1 13l-8 6" /></S></BarIcon>
          <Chevron color="#fff" />
          <BarIcon $dim aria-label="Redo"><S w={28} h={28}><path d="M24 9V2M24 9h-7M22 8a11 11 0 1 0 3 8" /></S></BarIcon>
          <BarIcon aria-label="More"><svg width="22" height="6" viewBox="0 0 22 6" fill="#fff"><circle cx="3" cy="3" r="2" /><circle cx="11" cy="3" r="2" /><circle cx="19" cy="3" r="2" /></svg></BarIcon>
        </TitleGroup>
        <DocName>
          <svg width="20" height="26" viewBox="0 0 20 26"><path d="M3 1h11l6 6v17H3z" fill="#f4f8f5" /><path d="M0 6h10v11H0z" fill="#a9c7b2" /><path d="M12 11h5v7h-5z" fill="#7ba88a" /></svg>
          ScatterPlot
          <Chevron color="#fff" size={14} />
        </DocName>
        <TitleGroup $end>
          <BarIcon $dim aria-label="Search"><S w={24} h={26}><circle cx="10" cy="10" r="8" /><path d="M16 16l7 8" /></S></BarIcon>
          <BarIcon aria-label="Share presence"><S w={20} h={28}><circle cx="9" cy="10" r="4" /><path d="M2 17h14v3c0 8-14 8-14 0zM14 4l6-2M15 10l5-4" /></S></BarIcon>
        </TitleGroup>
      </TitleBar>

      <TabRow>
        {tabs.map((t) => <Tab key={t}>{t}</Tab>)}
        <Tab $tone="active">Chart Design</Tab>
        <Tab $tone="green">Format</Tab>
        <TellMe>
          <svg width="18" height="26" viewBox="0 0 18 26" fill="#fff" stroke="#555" strokeWidth="2"><path d="M6 18c0-4-5-5-5-10a8 8 0 0 1 16 0c0 5-5 6-5 10zM6 18v4h6v-4M7 25h4" /></svg>
          Tell me
        </TellMe>
        <TabActions>
          <Pill><S w={22} h={22}><path d="M2 2h18v14h-8l-5 5v-5H2z" strokeWidth="1.5" /></S>Comments</Pill>
          <Pill><S w={22} h={22}><path d="M8 8H2v13h16v-5M13 2l7 6-7 6v-4c-4 0-6 2-7 6 0-6 2-10 7-10z" strokeWidth="1.5" /></S>Share</Pill>
        </TabActions>
      </TabRow>

      <Ribbon>
        <MenuAnchor>
          <SplitButton $pressed aria-label="Add chart element"><AddElementIcon /><Chevron size={11} w={2.5} /></SplitButton>
          <ElementMenu />
        </MenuAnchor>
        <Tools><SplitButton aria-label="Quick layout"><QuickLayoutIcon /><Chevron size={13} /></SplitButton></Tools>
        <Rule />
        <Palette><SplitButton aria-label="Change colors"><PaletteIcon /><Chevron size={13} /></SplitButton></Palette>
        <Gallery>
          {thumbs.map((t, i) => <ThumbButton key={i} $selected={i === 0}><Thumb t={t} /></ThumbButton>)}
          <GalleryNext aria-label="More styles"><Chevron dir="right" /></GalleryNext>
        </Gallery>
        <Rule />
        <BigGroup>
          <BigButton><BigIcon><SwitchIcon /></BigIcon>Switch<br />Row/Column</BigButton>
          <BigButton><BigIcon><SelectIcon /></BigIcon>Select<br />Data</BigButton>
        </BigGroup>
        <Rule />
        <BigGroup>
          <BigButton><BigIcon><BarTrio /><Chevron size={13} /></BigIcon>Change<br />Chart Type</BigButton>
        </BigGroup>
        <Rule />
        <BigGroup>
          <BigButton><BigIcon><MoveIcon /></BigIcon>Move<br />Chart</BigButton>
        </BigGroup>
      </Ribbon>

      <FormulaBar><NameBox aria-label="Name box" defaultValue="C" /></FormulaBar>

      <Body>
        <Worksheet />
        <FormatPanel />
      </Body>

      <Ink width="2244" height="1210" viewBox="0 0 2244 1210" fill="none" stroke="#ee4126" strokeWidth="6" strokeLinecap="round" strokeLinejoin="round">
        <path d="M1142 31C1150 28 1157 29 1225 28C1290 26 1320 20 1330 27C1338 34 1346 48 1362 60C1370 68 1371 76 1363 82C1356 87 1330 87 1273 97C1220 108 1190 120 1152 120C1130 119 1120 106 1121 90C1122 70 1128 36 1142 31Z" />
        <path d="M2031 255C2010 250 1990 244 1967 244C1940 245 1915 250 1887 252C1850 254 1770 254 1732 254C1710 256 1704 268 1704 278C1705 292 1726 305 1742 306C1760 305 1770 302 1790 301C1830 300 1880 300 1929 300C1950 299 1970 288 1995 277C2015 269 2020 264 2028 255" />
        <path d="M247 493C225 491 190 485 167 482C140 479 125 478 107 483C95 486 85 491 66 496C50 500 46 508 48 517C51 529 56 531 66 532C85 533 110 531 130 535C155 540 180 547 205 547C232 546 245 541 265 536C285 532 292 523 291 514C290 507 286 503 281 500" />
        <path d="M664 774C640 778 600 775 570 771C550 767 530 765 517 765C500 767 480 769 433 769L327 768C315 769 312 779 313 789C317 815 345 845 373 856C400 866 415 859 433 858C480 856 600 858 640 857C662 855 669 848 673 833C677 818 678 812 682 800" />
        <circle cx="1290" cy="702" r="2" fill="#ee4126" strokeWidth="1" />
        <path d="M509 824v15l3.500-3 2.500 5 2-1-2.500-5h5z" fill="#111" stroke="#eee" strokeWidth="1" />
      </Ink>
    </Page>
  );
}
